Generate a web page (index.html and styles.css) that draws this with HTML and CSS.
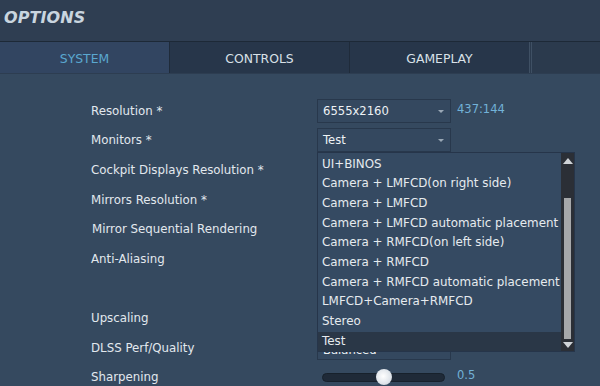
FILE: index.html
```html
<!DOCTYPE html>
<html>
<head>
<meta charset="utf-8">
<link rel="stylesheet" href="styles.css">
</head>
<body>
<header class="header"><h1 class="title">OPTIONS</h1></header>
<nav class="tabs">
  <div class="tab tab-active">SYSTEM</div>
  <div class="tab">CONTROLS</div>
  <div class="tab">GAMEPLAY</div>
  <div class="tab tab-rest"></div>
</nav>
<main class="form">
  <div class="label">Resolution *</div>
  <div class="control"><div class="select"><span>6555x2160</span><span class="arrow"></span></div><span class="note">437:144</span></div>

  <div class="label">Monitors *</div>
  <div class="control monitors">
    <div class="select"><span>Test</span><span class="arrow"></span></div>
    <div class="dropdown">
      <ul class="items">
        <li>UI+BINOS</li>
        <li>Camera + LMFCD(on right side)</li>
        <li>Camera + LMFCD</li>
        <li>Camera + LMFCD automatic placement</li>
        <li>Camera + RMFCD(on left side)</li>
        <li>Camera + RMFCD</li>
        <li>Camera + RMFCD automatic placement</li>
        <li>LMFCD+Camera+RMFCD</li>
        <li>Stereo</li>
        <li class="selected">Test</li>
      </ul>
      <div class="scrollbar">
        <span class="sb-up"></span>
        <div class="sb-track"><div class="sb-thumb"></div></div>
        <span class="sb-down"></span>
      </div>
    </div>
  </div>

  <div class="label">Cockpit Displays Resolution *</div>
  <div class="control"></div>

  <div class="label">Mirrors Resolution *</div>
  <div class="control"></div>

  <div class="label label-shift">Mirror Sequential Rendering</div>
  <div class="control"></div>

  <div class="label">Anti-Aliasing</div>
  <div class="control"></div>

  <div class="label"></div>
  <div class="control"></div>

  <div class="label">Upscaling</div>
  <div class="control"></div>

  <div class="label">DLSS Perf/Quality</div>
  <div class="control"><div class="select select-hidden"><span class="hidden-text">Balanced</span><span class="arrow"></span></div></div>

  <div class="label">Sharpening</div>
  <div class="control"><div class="slider"><span class="knob"></span></div><span class="note">0.5</span></div>
</main>
</body>
</html>
```
FILE: styles.css
```css
* { box-sizing: border-box; }
html, body { margin: 0; padding: 0; }
body {
  width: 600px;
  height: 386px;
  overflow: hidden;
  background: #35495f;
  font-family: "DejaVu Sans", sans-serif;
  color: #e2e8ee;
}
.header {
  height: 42px;
  background: #2f3e52;
  border-bottom: 1px solid #1d2937;
  display: flex;
  align-items: center;
  padding-left: 4px;
}
.title {
  margin: 0;
  font-size: 16px;
  font-weight: bold;
  font-style: italic;
  color: #c9d5df;
  letter-spacing: 0.1px;
  padding-bottom: 6px;
}
.tabs {
  display: flex;
  height: 32px;
  background: #2a394c;
  border-bottom: 1px solid #2d3d51;
}
.tab {
  display: flex;
  align-items: center;
  justify-content: center;
  font-size: 12.4px;
  color: #d9e1e8;
  width: 180px;
  background: #27364a;
  border-left: 1px solid #1f2b3a;
  padding-top: 2px;
}
.tab-active {
  width: 169px;
  border-left: none;
  background: #324561;
  color: #5aa8d0;
}
.tab-rest {
  width: 71px;
  border-left: 3px double #3f5064;
  background: #2b3a4d;
}
.form {
  display: grid;
  grid-template-columns: 226px 1fr;
  grid-auto-rows: 29.6px;
  padding: 22px 0 0 91px;
}
.label {
  display: flex;
  align-items: center;
  font-size: 11.8px;
  color: #e2e8ee;
}
.label-shift { padding-left: 1px; }
.control {
  display: flex;
  align-items: center;
  gap: 6px;
  position: relative;
}
.select {
  width: 134px;
  height: 24px;
  border: 1px solid #28384c;
  background: #34485f;
  display: flex;
  align-items: center;
  justify-content: space-between;
  padding: 0 6px 0 5px;
  font-size: 11.6px;
  color: #eef2f5;
}
.hidden-text { padding-top: 4px; }
.arrow {
  width: 0;
  height: 0;
  border-left: 3px solid transparent;
  border-right: 3px solid transparent;
  border-top: 3px solid #9aa8b6;
  margin-top: 1px;
}
.note {
  font-size: 11.5px;
  color: #72b2d8;
  margin-bottom: 4px;
}
.dropdown {
  position: absolute;
  left: 0;
  top: 26px;
  width: 258px;
  height: 200px;
  z-index: 5;
  display: flex;
  background: #354a62;
  border: 1px solid #26354a;
}
.items {
  list-style: none;
  margin: 0;
  padding: 2px 0 0;
  flex: 1;
}
.items li {
  height: 19.7px;
  line-height: 19.7px;
  padding-left: 4px;
  font-size: 11.9px;
  color: #e6ebef;
  white-space: nowrap;
}
.items li.selected {
  background: #2a3747;
}
.scrollbar {
  width: 13px;
  background: #2b2f36;
  display: flex;
  flex-direction: column;
  align-items: center;
  padding: 5px 0 3px;
}
.sb-up, .sb-down {
  width: 0;
  height: 0;
  border-left: 5px solid transparent;
  border-right: 5px solid transparent;
}
.sb-up { border-bottom: 6px solid #d0d4d8; }
.sb-down { border-top: 6px solid #d0d4d8; }
.sb-track {
  flex: 1;
  width: 100%;
  display: flex;
  flex-direction: column;
  justify-content: flex-end;
  align-items: center;
  padding: 0 0 3px;
}
.sb-thumb {
  width: 7px;
  height: 141px;
  background: #a6a8aa;
}
.slider {
  position: relative;
  width: 123px;
  height: 9px;
  margin-left: 5px;
  border-radius: 5px;
  background: #1f2a38;
  border: 1px solid #17212c;
  margin-right: 6px;
}
.knob {
  position: absolute;
  left: 53px;
  top: -5px;
  width: 16px;
  height: 16px;
  border-radius: 50%;
  background: radial-gradient(circle at 45% 45%, #ffffff 0%, #dfe4ea 60%, #b8c0c9 100%);
}
```
